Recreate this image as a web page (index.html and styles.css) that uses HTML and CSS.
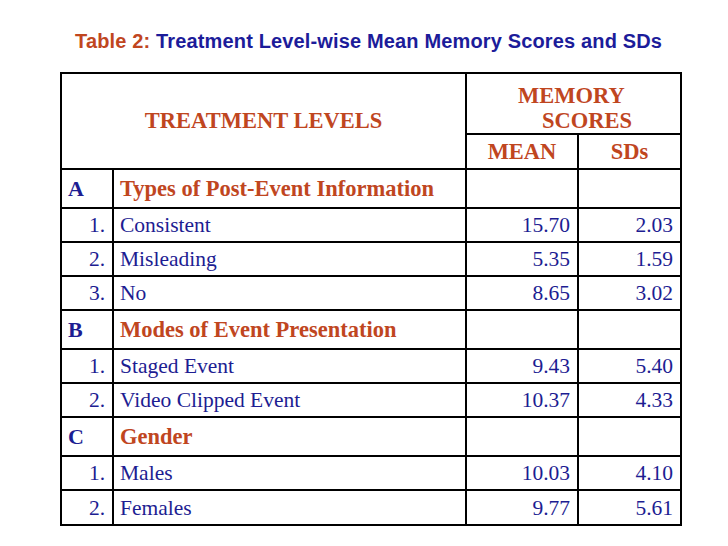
FILE: index.html
```html
<!DOCTYPE html>
<html>
<head>
<meta charset="utf-8">
<link rel="stylesheet" href="styles.css">
</head>
<body>
<h1 class="title"><span class="accent">Table 2:</span> Treatment Level-wise Mean Memory Scores and SDs</h1>
<table class="scores">
  <colgroup>
    <col class="c-idx"><col class="c-label"><col class="c-mean"><col class="c-sd">
  </colgroup>
  <thead>
    <tr class="h1">
      <th colspan="2" rowspan="2" class="levels">TREATMENT LEVELS</th>
      <th colspan="2" class="memory"><span class="l1">MEMORY</span><span class="l2">SCORES</span></th>
    </tr>
    <tr class="h2">
      <th>MEAN</th>
      <th>SDs</th>
    </tr>
  </thead>
  <tbody>
    <tr class="cat cat-a"><td class="idx-cat">A</td><td class="cat-name">Types of Post-Event Information</td><td></td><td></td></tr>
    <tr class="row"><td class="idx">1.</td><td class="name">Consistent</td><td class="num">15.70</td><td class="num">2.03</td></tr>
    <tr class="row"><td class="idx">2.</td><td class="name">Misleading</td><td class="num">5.35</td><td class="num">1.59</td></tr>
    <tr class="row"><td class="idx">3.</td><td class="name">No</td><td class="num">8.65</td><td class="num">3.02</td></tr>
    <tr class="cat"><td class="idx-cat">B</td><td class="cat-name">Modes of Event Presentation</td><td></td><td></td></tr>
    <tr class="row"><td class="idx">1.</td><td class="name">Staged Event</td><td class="num">9.43</td><td class="num">5.40</td></tr>
    <tr class="row"><td class="idx">2.</td><td class="name">Video Clipped Event</td><td class="num">10.37</td><td class="num">4.33</td></tr>
    <tr class="cat"><td class="idx-cat">C</td><td class="cat-name">Gender</td><td></td><td></td></tr>
    <tr class="row"><td class="idx">1.</td><td class="name">Males</td><td class="num">10.03</td><td class="num">4.10</td></tr>
    <tr class="row last"><td class="idx">2.</td><td class="name">Females</td><td class="num">9.77</td><td class="num">5.61</td></tr>
  </tbody>
</table>
</body>
</html>
```
FILE: styles.css
```css
html, body {
  margin: 0;
  padding: 0;
  background: #ffffff;
}
body {
  width: 728px;
  height: 546px;
  overflow: hidden;
}
.title {
  margin: 0;
  padding: 30px 0 0 75px;
  height: 42px;
  box-sizing: content-box;
  font-family: "Liberation Sans", Arial, sans-serif;
  font-weight: bold;
  font-size: 20px;
  letter-spacing: 0.15px;
  line-height: 22px;
  color: #1c1c9a;
}
.title .accent {
  color: #c0461f;
}
.scores {
  margin-left: 60px;
  border-collapse: collapse;
  table-layout: fixed;
  width: 620px;
  font-family: "Liberation Serif", "Times New Roman", serif;
  font-size: 21.5px;
  color: #1d1d92;
}
.c-idx { width: 52px; }
.c-label { width: 353px; }
.c-mean { width: 112px; }
.c-sd { width: 103px; }
.scores th, .scores td {
  border: 2px solid #000;
  padding: 0 7px 0 6px;
  line-height: 24px;
  white-space: nowrap;
}
.scores th {
  color: #c0461f;
  font-weight: bold;
  font-size: 22.5px;
  text-align: center;
  padding: 0;
}
.h1 { height: 57px; }
.h2 { height: 35px; }
.scores th.memory {
  text-align: left;
  vertical-align: top;
  padding-top: 9px;
  line-height: 25px;
}
.memory span { display: block; }
.memory .l1 { padding-left: 51px; }
.memory .l2 { padding-left: 75px; }
.cat { height: 39px; }
.cat-a { height: 39px; }
.row { height: 34px; }
.row.last { height: 35px; }
.idx-cat {
  font-weight: bold;
  font-size: 22px;
  color: #1d1d92;
}
.cat-name {
  font-weight: bold;
  font-size: 22.5px;
  color: #c0461f;
}
.idx { text-align: right; }
.num { text-align: right; }
```
